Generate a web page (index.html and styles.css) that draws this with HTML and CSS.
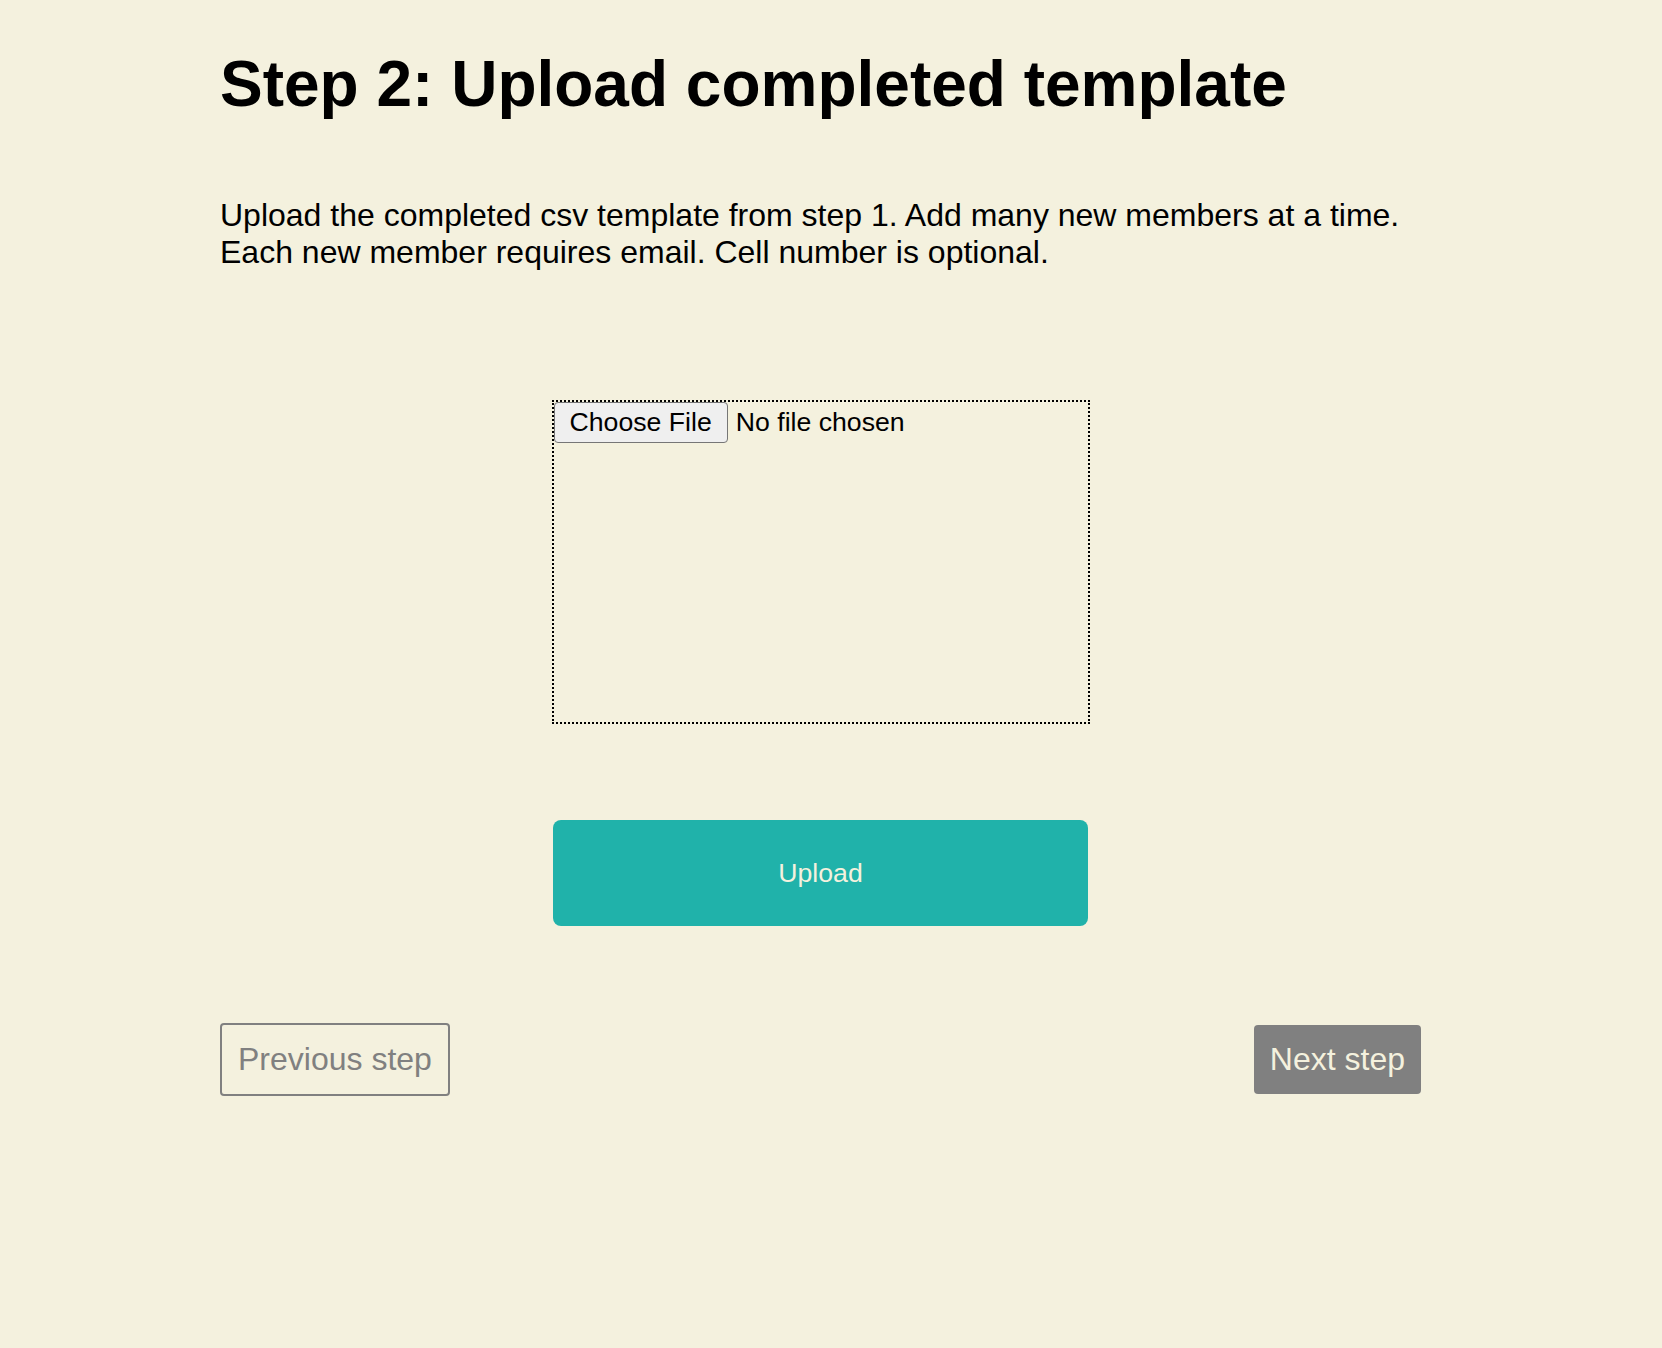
FILE: index.html
```html
<!DOCTYPE html>
<html lang="en">
<head>
<meta charset="utf-8">
<title>Step 2: Upload completed template</title>
<link rel="stylesheet" href="styles.css">
</head>
<body>
<main class="page">
  <h1 class="title">Step 2: Upload completed template</h1>
  <p class="intro">Upload the completed csv template from step 1. Add many new members at a time.<br>Each new member requires email. Cell number is optional.</p>
  <form class="upload-form">
    <div class="dropzone">
      <button type="button" class="choose">Choose File</button>
      <span class="filename">No file chosen</span>
    </div>
    <button type="button" class="upload">Upload</button>
  </form>
  <nav class="steps">
    <button type="button" class="prev">Previous step</button>
    <button type="button" class="next">Next step</button>
  </nav>
</main>
</body>
</html>
```
FILE: styles.css
```css
html, body {
  margin: 0;
  padding: 0;
}
body {
  background: #f4f1de;
  color: #000;
  font-family: "Liberation Sans", Arial, sans-serif;
}
.page {
  width: 1201px;
  margin-left: 220px;
  padding-top: 47px;
  display: flex;
  flex-direction: column;
}
.title {
  margin: 0 0 76px;
  font-size: 64px;
  font-weight: bold;
  line-height: normal;
}
.intro {
  margin: 0;
  font-size: 32px;
  line-height: normal;
}
.upload-form {
  margin-top: 129px;
  display: flex;
  flex-direction: column;
  align-items: center;
}
.dropzone {
  box-sizing: border-box;
  width: 538px;
  height: 324px;
  border: 2px dotted #000;
  display: flex;
  align-items: baseline;
  font-size: 26.67px;
}
.choose {
  font-family: "Liberation Sans", Arial, sans-serif;
  font-size: 26.67px;
  line-height: normal;
  color: #000;
  background: #efefef;
  border: 1px solid #767676;
  border-radius: 4px;
  padding: 4px 15px;
  margin: 0 8px 0 0;
}
.filename {
  color: #000;
}
.upload {
  margin-top: 96px;
  width: 535px;
  height: 106px;
  border: none;
  border-radius: 8px;
  background: #20b2aa;
  color: #f4f1de;
  font-family: "Liberation Sans", Arial, sans-serif;
  font-size: 26.67px;
}
.steps {
  margin-top: 97px;
  display: flex;
  justify-content: space-between;
  align-items: center;
}
.prev, .next {
  font-family: "Liberation Sans", Arial, sans-serif;
  font-size: 32px;
  line-height: normal;
  padding: 16px;
  border-radius: 4px;
}
.prev {
  background: transparent;
  color: #808080;
  border: 2px solid #808080;
}
.next {
  background: #808080;
  color: #f4f1de;
  border: none;
}
```
